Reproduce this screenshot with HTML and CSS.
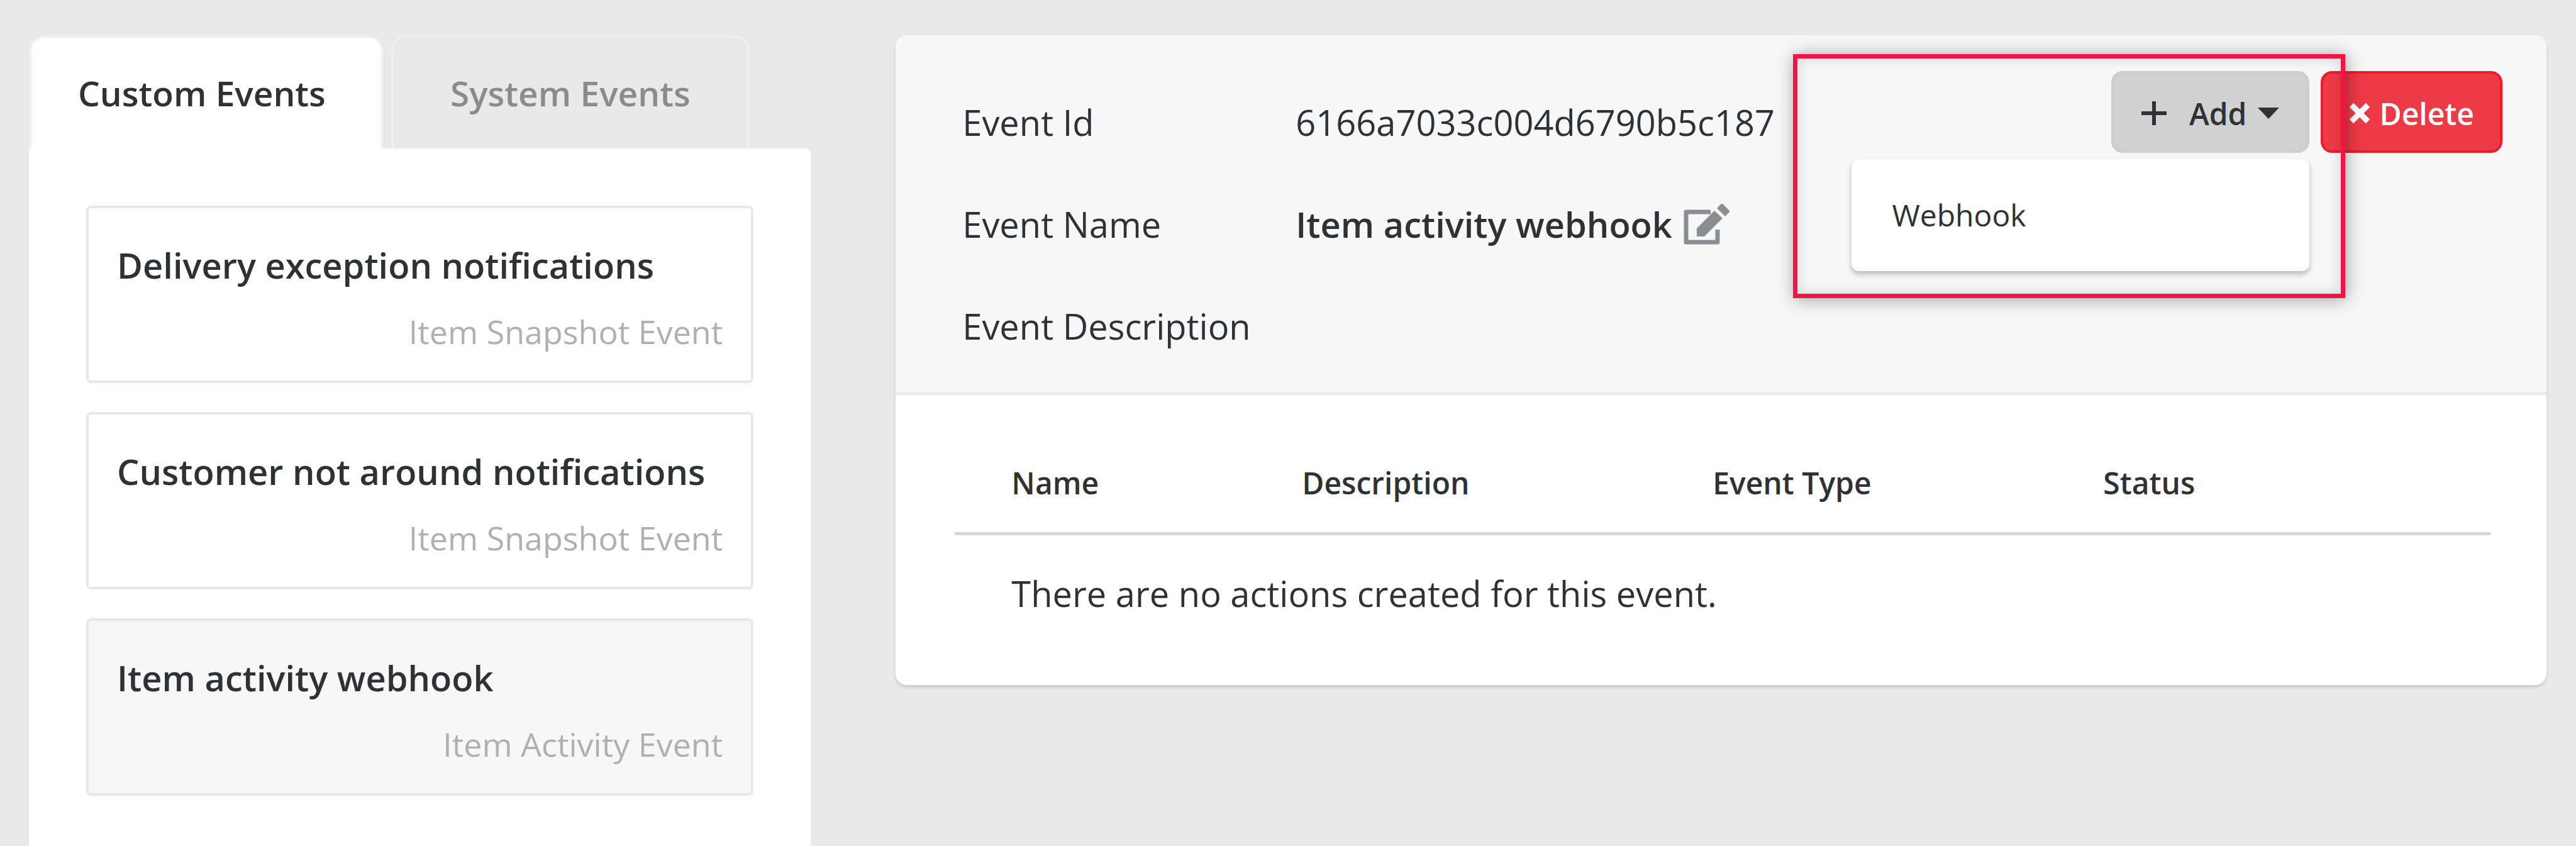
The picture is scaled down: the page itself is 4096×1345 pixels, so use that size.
FILE: index.html
```
<!DOCTYPE html>
<html lang="en">
<head>
    <meta charset="UTF-8">
    <meta name="viewport" content="width=device-width, initial-scale=1.0">
    <title>Custom Events</title>
    <link rel="stylesheet" href="styles.css">
</head>
<body>
    <main class="page">
        <section class="sidebar">
            <nav class="tabs">
                <a class="tab active" href="#custom">Custom Events</a>
                <a class="tab" href="#system">System Events</a>
            </nav>
            <div class="event-list">
                <a class="event-card" href="#event-1">
                    <h2 class="event-title">Delivery exception notifications</h2>
                    <p class="event-type">Item Snapshot Event</p>
                </a>
                <a class="event-card" href="#event-2">
                    <h2 class="event-title">Customer not around notifications</h2>
                    <p class="event-type">Item Snapshot Event</p>
                </a>
                <a class="event-card selected" href="#event-3">
                    <h2 class="event-title">Item activity webhook</h2>
                    <p class="event-type">Item Activity Event</p>
                </a>
            </div>
        </section>

        <section class="detail">
            <header class="detail-header">
                <dl class="fields">
                    <dt>Event Id</dt>
                    <dd>6166a7033c004d6790b5c187</dd>
                    <dt>Event Name</dt>
                    <dd class="name">
                        Item activity webhook
                        <button class="edit-button" aria-label="Edit name">
                            <svg viewBox="0 0 76 66">
                                <path class="frame" d="M43 14H4v48h50V42"></path>
                                <path class="pencil" d="M49 12l13 12-29 29H21V40z"></path>
                                <path class="pencil" d="M53 8l6-6q2-2 4 0l9 9q2 2 0 4l-6 6z"></path>
                            </svg>
                        </button>
                    </dd>
                    <dt>Event Description</dt>
                    <dd></dd>
                </dl>

                <div class="actions">
                    <div class="dropdown">
                        <button class="btn btn-add" aria-expanded="true">
                            <svg class="icon-plus" viewBox="0 0 40 40"><path d="M20 1v38M0 20h40"></path></svg>
                            Add
                            <svg class="icon-caret" viewBox="0 0 34 18"><path d="M0 0h34L17 18z"></path></svg>
                        </button>
                        <div class="dropdown-menu">
                            <a class="dropdown-item" href="#webhook">Webhook</a>
                        </div>
                    </div>
                    <button class="btn btn-delete">
                        <svg class="icon-times" viewBox="0 0 34 34"><path d="M4 4l26 26M30 4L4 30"></path></svg>
                        Delete
                    </button>
                    <div class="highlight"></div>
                </div>
            </header>

            <div class="detail-body">
                <table class="actions-table">
                    <thead>
                        <tr>
                            <th class="col-name">Name</th>
                            <th class="col-description">Description</th>
                            <th class="col-type">Event Type</th>
                            <th>Status</th>
                        </tr>
                    </thead>
                    <tbody>
                        <tr>
                            <td colspan="4">There are no actions created for this event.</td>
                        </tr>
                    </tbody>
                </table>
            </div>
        </section>
    </main>
</body>
</html>
```
FILE: styles.css
```
:root {
    --page-bg: #e9e9e9;
    --header-bg: #f7f7f7;
    --text: #2f3235;
    --muted: #8b8b8b;
    --light-text: #b0b0b0;
    --border: #e8e8e8;
    --red: #ee3a46;
    --highlight: #f11546;
}

* {
    margin: 0;
    padding: 0;
    box-sizing: border-box;
}

body {
    background: var(--page-bg);
    color: var(--text);
    font-family: "Open Sans", "Noto Sans", sans-serif;
    font-size: 56px;
    line-height: 84px;
}

a {
    color: inherit;
    text-decoration: none;
}

button {
    font-family: inherit;
    color: inherit;
    border: none;
    background: none;
    cursor: pointer;
}

.page {
    display: grid;
    grid-template-columns: 9fr 19fr;
    gap: 135px;
    min-height: 100vh;
    padding: 56px 47px 0 46px;
}

/* Sidebar */
.sidebar {
    display: flex;
    flex-direction: column;
}

.tabs {
    display: flex;
    gap: 12px;
}

.tab {
    height: 180px;
    padding: 46px 90px 0;
    border: 4px solid #efefef;
    border-bottom: none;
    border-radius: 24px 24px 0 0;
    color: var(--muted);
    font-size: 55px;
    font-weight: 600;
}

.tab.active {
    padding: 46px 88px 0 74px;
    background: #ffffff;
    color: var(--text);
}

.event-list {
    flex: 1;
    display: flex;
    flex-direction: column;
    gap: 46px;
    padding: 91px 91px 0;
    background: #ffffff;
    border-radius: 0 8px 0 0;
}

.event-card {
    padding: 48px 45px 42px;
    border: 4px solid var(--border);
    border-radius: 8px;
}

.event-card.selected {
    background: var(--header-bg);
}

.event-title {
    margin-bottom: 28px;
    font-size: 56px;
    font-weight: 600;
}

.event-type {
    color: var(--light-text);
    font-size: 52px;
    line-height: 72px;
    text-align: right;
}

/* Event detail */
.detail {
    align-self: start;
    background: #ffffff;
    border-radius: 18px;
    box-shadow: 0 4px 5px rgba(0, 0, 0, 0.12);
}

.detail-header {
    display: flex;
    justify-content: space-between;
    align-items: flex-start;
    padding: 57px 70px 25px 106px;
    background: var(--header-bg);
    border-bottom: 4px solid var(--border);
    border-radius: 18px 18px 0 0;
}

.fields {
    display: grid;
    grid-template-columns: 530px auto;
    grid-auto-rows: 162px;
    align-items: center;
}

.name {
    display: flex;
    align-items: center;
    gap: 18px;
    font-weight: 600;
}

.edit-button {
    display: flex;
}

.edit-button svg {
    width: 76px;
    height: 66px;
}

.frame {
    fill: none;
    stroke: #8c8d91;
    stroke-width: 7;
    stroke-linejoin: round;
}

.pencil {
    fill: #8c8d91;
}

.actions {
    position: relative;
    display: flex;
    gap: 18px;
}

.dropdown {
    position: relative;
}

.btn {
    display: flex;
    align-items: center;
    height: 130px;
    padding: 4px 44px 0;
    border: 4px solid;
    border-radius: 18px;
    font-size: 48px;
    font-weight: 600;
}

.btn-add {
    background: #d1d1d1;
    border-color: #cdcdcd;
}

.btn-delete {
    gap: 14px;
    padding: 4px 41px 0;
    background: var(--red);
    border-color: #ed1c2a;
    color: #ffffff;
}

.icon-plus {
    width: 40px;
    height: 40px;
    margin-right: 36px;
    fill: none;
    stroke: currentColor;
    stroke-width: 6;
}

.icon-caret {
    width: 34px;
    height: 18px;
    margin-left: 18px;
    fill: currentColor;
}

.icon-times {
    width: 34px;
    height: 34px;
    fill: none;
    stroke: currentColor;
    stroke-width: 9;
}

.dropdown-menu {
    position: absolute;
    top: 100%;
    right: 0;
    width: 728px;
    margin-top: 10px;
    padding: 53px 64px;
    background: #ffffff;
    border-radius: 12px;
    box-shadow: 0 5px 8px rgba(0, 0, 0, 0.25);
}

.dropdown-item {
    display: block;
    font-size: 48px;
    line-height: 72px;
}

/* Callout frame around the Add menu */
.highlight {
    position: absolute;
    top: -27px;
    right: 250px;
    width: 878px;
    height: 388px;
    border: 7px solid var(--highlight);
    box-shadow: 2px 2px 26px rgba(0, 0, 0, 0.35), inset 0 0 20px rgba(0, 0, 0, 0.15);
    pointer-events: none;
}

/* Actions table */
.detail-body {
    padding: 62px 89px 54px 94px;
}

.actions-table {
    width: 100%;
    table-layout: fixed;
    border-collapse: collapse;
    text-align: left;
}

.actions-table th {
    padding: 42px 0 42px 90px;
    border-bottom: 5px solid #d6d6d6;
    font-size: 48px;
    font-weight: 600;
    line-height: 72px;
}

.actions-table td {
    padding: 50px 0 50px 90px;
}

.col-name {
    width: 462px;
}

.col-description {
    width: 653px;
}

.col-type {
    width: 621px;
}
```
